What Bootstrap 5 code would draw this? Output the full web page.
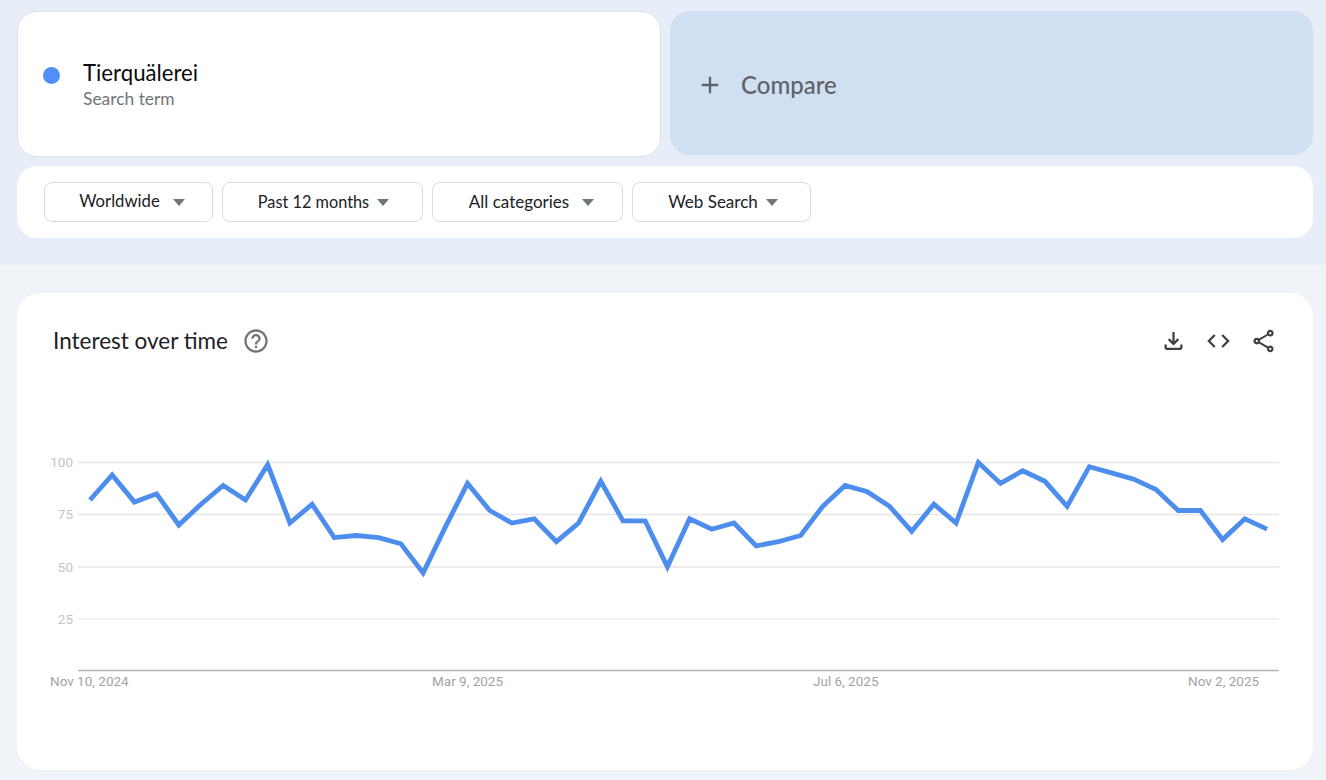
<!DOCTYPE html>
<html lang="en">
<head>
    <meta charset="UTF-8">
    <meta name="viewport" content="width=device-width, initial-scale=1.0">
    <title>Google Trends</title>
    <link href="https://cdn.jsdelivr.net/npm/bootstrap@5.3.0/dist/css/bootstrap.min.css" rel="stylesheet">
    <style>
        html, body { height: 780px; overflow: hidden; }
        body { background: #f0f4f9; font-family: "Lato", "Liberation Sans", sans-serif; color: #202124; }
        .top-band { background: #e8eef7; height: 265px; padding: 11px 13px 0 17px; }
        .term-card { width: 644px; height: 146px; background: #fff; border: 1px solid #dde1e8; border-radius: 20px; padding-left: 25px; }
        .term-dot { width: 17px; height: 17px; border-radius: 50%; background: #4f8ff7; margin-right: 23px; margin-top: -17px; }
        .term-text { margin-top: 4px; }
        .term-name { font-size: 22.2px; line-height: 26px; color: #0b0b0b; }
        .term-sub { font-size: 17.4px; line-height: 26px; color: #70757a; }
        .compare-card { width: 643px; height: 144px; margin-left: 9px; background: #d1dff3; border-radius: 20px; padding: 4px 0 0 26px; color: #5f6368; }
        .compare-card span { font-size: 24px; margin-left: 17px; font-weight: 500; }
        .filter-card { height: 72px; margin-top: 9px; background: #fff; border-radius: 20px; padding-left: 27px; gap: 9px; }
        .filter-btn { height: 40px; background: #fff; border: 1px solid #dadce0; border-radius: 8px; font-size: 16.3px; color: #202124; padding: 0; }
        .filter-btn:hover { background: #fff; border-color: #dadce0; }
        .filter-region { width: 169px; padding-left: 7px; font-size: 16.7px; }
        .filter-time { width: 201px; padding-left: 2px; }
        .filter-category { width: 191px; padding-left: 8px; font-size: 17px; }
        .filter-property { width: 179px; padding-left: 3px; font-size: 17px; }
        .caret-down { width: 0; height: 0; margin-left: 13px; border-left: 6.5px solid transparent; border-right: 6.5px solid transparent; border-top: 7px solid #70757a; }
        .caret-near { margin-left: 8px; }
        .chart-wrap { padding: 28px 13px 0 17px; }
        .chart-card { height: 477px; background: #fff; border-radius: 24px; }
        .chart-head { padding: 33px 36px 0 36px; height: 68px; }
        .chart-title { font-size: 22.5px; line-height: 30px; color: #202124; }
        .help-icon { margin-left: 14px; }
        .chart-tools { gap: 18px; }
        .chart-svg { display: block; }
        .axis-text { font-family: "Roboto", "Liberation Sans", sans-serif; font-size: 13.5px; }
    </style>
</head>
<body>
<div class="top-band">
    <div class="d-flex">
        <div class="term-card d-flex align-items-center">
            <div class="term-dot"></div>
            <div class="term-text">
                <div class="term-name">Tierquälerei</div>
                <div class="term-sub">Search term</div>
            </div>
        </div>
        <div class="compare-card d-flex align-items-center">
            <svg width="28" height="28" viewBox="0 0 24 24" fill="#5f6368"><path d="M19 13h-6v6h-2v-6H5v-2h6V5h2v6h6v2z"/></svg>
            <span>Compare</span>
        </div>
    </div>
    <div class="filter-card d-flex align-items-center">
        <button type="button" class="btn filter-btn filter-region d-flex align-items-center justify-content-center"><span>Worldwide</span><i class="caret-down"></i></button>
        <button type="button" class="btn filter-btn filter-time d-flex align-items-center justify-content-center"><span>Past 12 months</span><i class="caret-down caret-near"></i></button>
        <button type="button" class="btn filter-btn filter-category d-flex align-items-center justify-content-center"><span>All categories</span><i class="caret-down"></i></button>
        <button type="button" class="btn filter-btn filter-property d-flex align-items-center justify-content-center"><span>Web Search</span><i class="caret-down caret-near"></i></button>
    </div>
</div>

<div class="chart-wrap">
    <div class="chart-card">
        <div class="chart-head d-flex justify-content-between align-items-start">
            <div class="d-flex align-items-center">
                <span class="chart-title">Interest over time</span>
                <svg class="help-icon" width="28" height="28" viewBox="0 0 24 24" fill="#757575"><path d="M11 18h2v-2h-2v2zm1-16C6.48 2 2 6.48 2 12s4.48 10 10 10 10-4.48 10-10S17.52 2 12 2zm0 18c-4.41 0-8-3.59-8-8s3.59-8 8-8 8 3.59 8 8-3.59 8-8 8zm0-14c-2.21 0-4 1.79-4 4h2c0-1.1.9-2 2-2s2 .9 2 2c0 2-3 1.75-3 5h2c0-2.25 3-2.5 3-5 0-2.21-1.79-4-4-4z"/></svg>
            </div>
            <div class="d-flex chart-tools">
                <svg width="27" height="30" viewBox="0 0 24 24" fill="#3c4043"><path d="M18 15v3H6v-3H4v3c0 1.1.9 2 2 2h12c1.1 0 2-.9 2-2v-3h-2zm-1-4-1.41-1.41L13 12.17V4h-2v8.17L8.41 9.59 7 11l5 5 5-5z"/></svg>
                <svg width="27" height="30" viewBox="0 0 24 24" fill="#3c4043"><path d="M9.4 16.6 4.8 12l4.6-4.6L8 6l-6 6 6 6 1.4-1.4zm5.2 0 4.6-4.6-4.6-4.6L16 6l6 6-6 6-1.4-1.4z"/></svg>
                <svg width="27" height="30" viewBox="0 0 24 24" fill="#3c4043"><path d="M18 16.08c-.76 0-1.44.3-1.96.77L8.91 12.7c.05-.23.09-.46.09-.7s-.04-.47-.09-.7l7.05-4.11c.54.5 1.25.81 2.04.81 1.66 0 3-1.34 3-3s-1.34-3-3-3-3 1.34-3 3c0 .24.04.47.09.7L8.04 9.81C7.5 9.31 6.79 9 6 9c-1.66 0-3 1.34-3 3s1.34 3 3 3c.79 0 1.5-.31 2.04-.81l7.12 4.16c-.05.21-.08.43-.08.65 0 1.61 1.31 2.92 2.92 2.92s2.92-1.31 2.92-2.92-1.31-2.92-2.92-2.92zM18 4c.55 0 1 .45 1 1s-.45 1-1 1-1-.45-1-1 .45-1 1-1zM6 13c-.55 0-1-.45-1-1s.45-1 1-1 1 .45 1 1-.45 1-1 1zm12 7.02c-.55 0-1-.45-1-1s.45-1 1-1 1 .45 1 1-.45 1-1 1z"/></svg>
            </div>
        </div>
        <!-- svg origin is 17,361 on the page -->
        <svg class="chart-svg" width="1296" height="340" viewBox="17 361 1296 340">
            <g stroke-width="1.5">
                <line x1="78" x2="1279" y1="462.5" y2="462.5" stroke="#e6e6e6"/>
                <line x1="78" x2="1279" y1="514.5" y2="514.5" stroke="#e6e6e6"/>
                <line x1="78" x2="1279" y1="567" y2="567" stroke="#e6e6e6"/>
                <line x1="78" x2="1279" y1="619" y2="619" stroke="#eeeeee"/>
                <line x1="78" x2="1279" y1="670.5" y2="670.5" stroke="#b3b3b3"/>
            </g>
            <g class="axis-text" fill="#c4c4c4" text-anchor="end">
                <text x="73" y="467">100</text>
                <text x="73" y="519">75</text>
                <text x="73" y="571.5">50</text>
                <text x="73" y="623.5">25</text>
            </g>
            <g class="axis-text" fill="#a3a3a3">
                <text x="50" y="686">Nov 10, 2024</text>
                <text x="432" y="686">Mar 9, 2025</text>
                <text x="813" y="686">Jul 6, 2025</text>
                <text x="1188" y="686">Nov 2, 2025</text>
            </g>
            <polyline id="trend-line" fill="none" stroke="#4d8ded" stroke-width="4.8" stroke-linejoin="miter"/>
        </svg>
    </div>
</div>

<script src="https://cdn.jsdelivr.net/npm/bootstrap@5.3.0/dist/js/bootstrap.bundle.min.js"></script>
<script>
    // weekly values read from the chart
    const values = [82, 94, 81, 85, 70, 80, 89, 82, 99, 71, 80, 64, 65, 64, 61, 47, 69, 90, 77, 71, 73, 62, 71, 91, 72, 72, 50,
        73, 68, 71, 60, 62, 65, 79, 89, 86, 79, 67, 80, 71, 100, 90, 96, 91, 79, 98, 95, 92, 87, 77, 77, 63, 73, 68];
    const step = (1267 - 90) / (values.length - 1);
    const points = values.map((v, i) => (90 + i * step).toFixed(1) + ',' + (671 - v * 2.085).toFixed(1));
    document.getElementById('trend-line').setAttribute('points', points.join(' '));
</script>
</body>
</html>
